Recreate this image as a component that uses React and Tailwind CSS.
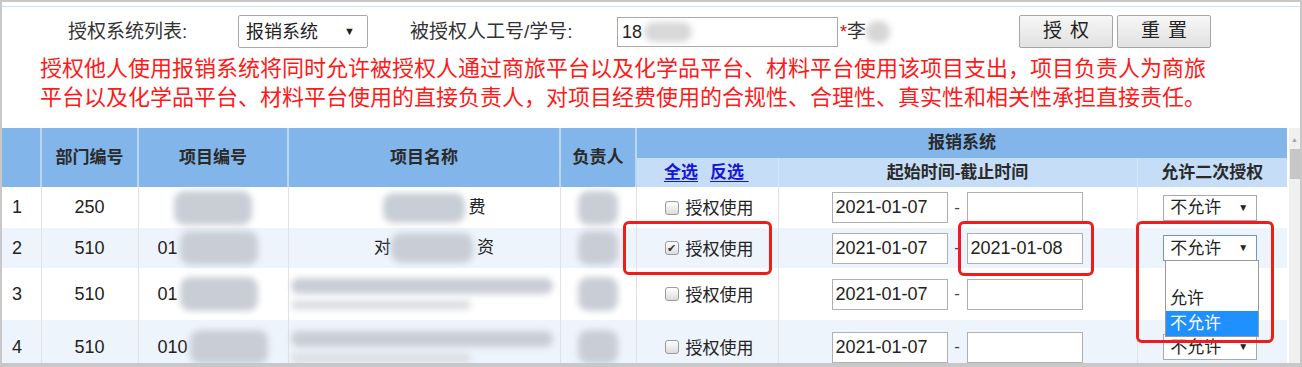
import React from 'react';

const Blob = ({ className }) => (
  <span className={`inline-block align-middle rounded-[10px] bg-[#c9ced6] blur-[3px] ${className}`} />
);

const Checkbox = ({ checked }) => (
  <span className="inline-flex items-center justify-center w-[14px] h-[14px] border border-[#9a9a9a] rounded-[3px] bg-gradient-to-b from-[#ffffff] to-[#dcdcdc] text-[11px] leading-none text-[#333]">
    {checked ? '✔' : ''}
  </span>
);

const DateBox = ({ value }) => (
  <div className="w-[116px] h-[31px] border border-[#b0b0b0] bg-white flex items-center px-[3px] text-[18px] text-[#222]">
    {value}
  </div>
);

const MiniSelect = ({ focused, hidden }) => (
  <div
    className={`w-[94px] h-[26px] border bg-white flex items-center justify-between pl-[6px] pr-[8px] text-[17px] text-[#222] ${
      focused ? 'border-[#6f93d4]' : 'border-[#a9a9a9]'
    } ${hidden ? 'invisible' : ''}`}
  >
    <span className="leading-none">不允许</span>
    <span className="text-[10px] leading-none">▼</span>
  </div>
);

const rows = [
  { n: 1, dept: '250', code: '', name: { pre: '', post: '费' }, checked: false, end: '', h: 'h-[41px]', bg: 'bg-white' },
  { n: 2, dept: '510', code: '01', name: { pre: '对', post: '资' }, checked: true, end: '2021-01-08', h: 'h-[40px]', bg: 'bg-[#eef4fc]', focused: true },
  { n: 3, dept: '510', code: '01', name: null, checked: false, end: '', h: 'h-[52px]', bg: 'bg-white', covered: true },
  { n: 4, dept: '510', code: '010', name: null, checked: false, end: '', h: 'h-[54px]', bg: 'bg-[#eef4fc]' },
];

export default function App() {
  const th = 'border-r-2 border-[#bcd5f1] bg-[#82b5e9] font-bold text-[17px] text-[#2a2a2a] text-center';
  const td = 'border-r border-[#e2e2e2] p-0';

  return (
    <div className="relative w-[1302px] h-[367px] overflow-hidden bg-white border-x-2 border-t-2 border-b-4 border-[#c8c8c8] font-['Liberation_Sans','Noto_Sans_CJK_SC',sans-serif] text-[#333]">
      <div className="h-[4px]" />
      <div className="border-t border-[#cfe0f2]" />

      {/* search row */}
      <div className="mt-[8px] h-[33px] flex items-center">
        <span className="ml-[66px] w-[170px] text-[19px] leading-none text-[#333]">授权系统列表:</span>
        <div className="w-[130px] h-[33px] border border-[#a9a9a9] rounded-[2px] bg-white flex items-center justify-between pl-[7px] pr-[12px] text-[18px] text-[#222]">
          <span className="leading-none">报销系统</span>
          <span className="text-[11px] leading-none">▼</span>
        </div>
        <span className="ml-[42px] w-[207px] text-[19px] leading-none text-[#333]">被授权人工号/学号:</span>
        <div className="w-[221px] h-[30px] border border-[#a9a9a9] bg-white flex items-center pl-[4px] text-[18px] text-[#222]">
          <span className="leading-none">18</span>
          <Blob className="ml-[2px] w-[48px] h-[20px] bg-[#d8d8d8]" />
        </div>
        <span className="ml-[2px] text-[18px] leading-none text-[#ff0000]">*</span>
        <span className="text-[19px] leading-none text-[#333]">李</span>
        <Blob className="w-[24px] h-[22px] bg-[#d6d6d6]" />
        <button className="ml-[129px] w-[94px] h-[33px] border border-[#a6a6a6] rounded-[2px] bg-gradient-to-b from-[#f7f7f7] to-[#e1e1e1] text-[19px] tracking-[8px] pl-[8px] text-[#222]">
          授权
        </button>
        <button className="ml-[4px] w-[94px] h-[33px] border border-[#a6a6a6] rounded-[2px] bg-gradient-to-b from-[#f7f7f7] to-[#e1e1e1] text-[19px] tracking-[8px] pl-[8px] text-[#222]">
          重置
        </button>
      </div>

      {/* notice */}
      <div className="mt-[6px] pl-[38px] text-[22px] leading-[29px] text-[#ff1a1a] whitespace-nowrap">
        <div>授权他人使用报销系统将同时允许被授权人通过商旅平台以及化学品平台、材料平台使用该项目支出，项目负责人为商旅</div>
        <div>平台以及化学品平台、材料平台使用的直接负责人，对项目经费使用的合规性、合理性、真实性和相关性承担直接责任。</div>
      </div>

      {/* table + scrollbar */}
      <div className="mt-[16px] flex">
        <table className="table-fixed border-collapse w-[1285px]">
          <colgroup>
            <col className="w-[39px]" />
            <col className="w-[97px]" />
            <col className="w-[150px]" />
            <col className="w-[272px]" />
            <col className="w-[76px]" />
            <col className="w-[142px]" />
            <col className="w-[359px]" />
            <col className="w-[150px]" />
          </colgroup>
          <thead>
            <tr className="h-[30px]">
              <th rowSpan={2} className={th}></th>
              <th rowSpan={2} className={th}>部门编号</th>
              <th rowSpan={2} className={th}>项目编号</th>
              <th rowSpan={2} className={th}>项目名称</th>
              <th rowSpan={2} className={th}>负责人</th>
              <th colSpan={3} className="bg-[#82b5e9] font-bold text-[17px] text-[#2a2a2a] text-center">报销系统</th>
            </tr>
            <tr className="h-[29px] bg-[#c5ddf6]">
              <th className="text-left pl-[27px] border-r border-[#d7e6f7]">
                <span className="text-[17px] font-bold text-[#1616d8] underline underline-offset-[3px]">全选</span>
                <span className="ml-[12px] text-[17px] font-bold text-[#1616d8] underline underline-offset-[3px]">反选&nbsp;</span>
              </th>
              <th className="font-bold text-[17px] text-[#2a2a2a] border-r border-[#d7e6f7]">起始时间-截止时间</th>
              <th className="font-bold text-[17px] text-[#2a2a2a]">允许二次授权</th>
            </tr>
          </thead>
          <tbody>
            {rows.map((r) => (
              <tr key={r.n} className={`${r.h} ${r.bg} text-[18px] text-[#222]`}>
                <td className={`${td} pl-[10px]`}>{r.n}</td>
                <td className={`${td} text-center`}>{r.dept}</td>
                <td className={`${td} pl-[19px] whitespace-nowrap`}>
                  <span className="align-middle">{r.code}</span>
                  <Blob className={`${r.code ? 'ml-[2px]' : 'ml-[16px]'} w-[78px] h-[34px]`} />
                </td>
                <td className={`${td} whitespace-nowrap`}>
                  {r.name ? (
                    <div className="flex items-center justify-center pl-[20px]">
                      <span className="text-[17px]">{r.name.pre}</span>
                      <Blob className="w-[82px] h-[30px]" />
                      <span className="ml-[4px] text-[17px]">{r.name.post}</span>
                    </div>
                  ) : (
                    <div className="flex flex-col gap-[6px] px-[2px]">
                      <Blob className="w-[262px] h-[16px] rounded-[2px]" />
                      <Blob className="w-[180px] h-[10px] rounded-[2px] bg-[#dcdfe3]" />
                    </div>
                  )}
                </td>
                <td className={`${td} text-center`}>
                  <Blob className="w-[40px] h-[34px] rounded-[6px]" />
                </td>
                <td className={`${td}`}>
                  <div className="flex items-center pl-[28px] gap-[7px]">
                    <Checkbox checked={r.checked} />
                    <span className="text-[17px] leading-none pt-[2px]">授权使用</span>
                  </div>
                </td>
                <td className={`${td}`}>
                  <div className="flex items-center pl-[53px]">
                    <DateBox value="2021-01-07" />
                    <span className="w-[19px] text-center text-[17px] text-[#444]">-</span>
                    <DateBox value={r.end} />
                  </div>
                </td>
                <td className="p-0">
                  <div className="flex justify-center pr-[4px]">
                    <MiniSelect focused={r.focused} hidden={r.covered} />
                  </div>
                </td>
              </tr>
            ))}
          </tbody>
        </table>

        {/* scrollbar */}
        <div className="ml-[2px] w-[12px] h-[235px] bg-[#f0f0f0] flex flex-col items-center">
          <span className="mt-[8px] text-[7px] leading-none text-[#a3a3a3]">▲</span>
          <div className="mt-[6px] w-[10px] h-[30px] bg-[#c6c6c6]" />
        </div>
      </div>

      {/* open dropdown of row 2 */}
      <div className="absolute left-[1163px] top-[258px] w-[94px] border border-[#9a9a9a] bg-white text-[17px] text-[#222]">
        <div className="h-[25px]" />
        <div className="h-[25px] pl-[4px] flex items-center">允许</div>
        <div className="h-[25px] pl-[4px] flex items-center bg-[#1e90ff] text-white">不允许</div>
      </div>

      {/* highlight boxes */}
      <div className="absolute left-[621px] top-[219px] w-[149px] h-[54px] border-[3px] border-[#f01c1c] rounded-[6px]" />
      <div className="absolute left-[956px] top-[219px] w-[136px] h-[55px] border-[3px] border-[#f01c1c] rounded-[6px]" />
      <div className="absolute left-[1134px] top-[219px] w-[138px] h-[122px] border-[3px] border-[#f01c1c] rounded-[6px]" />
    </div>
  );
}
